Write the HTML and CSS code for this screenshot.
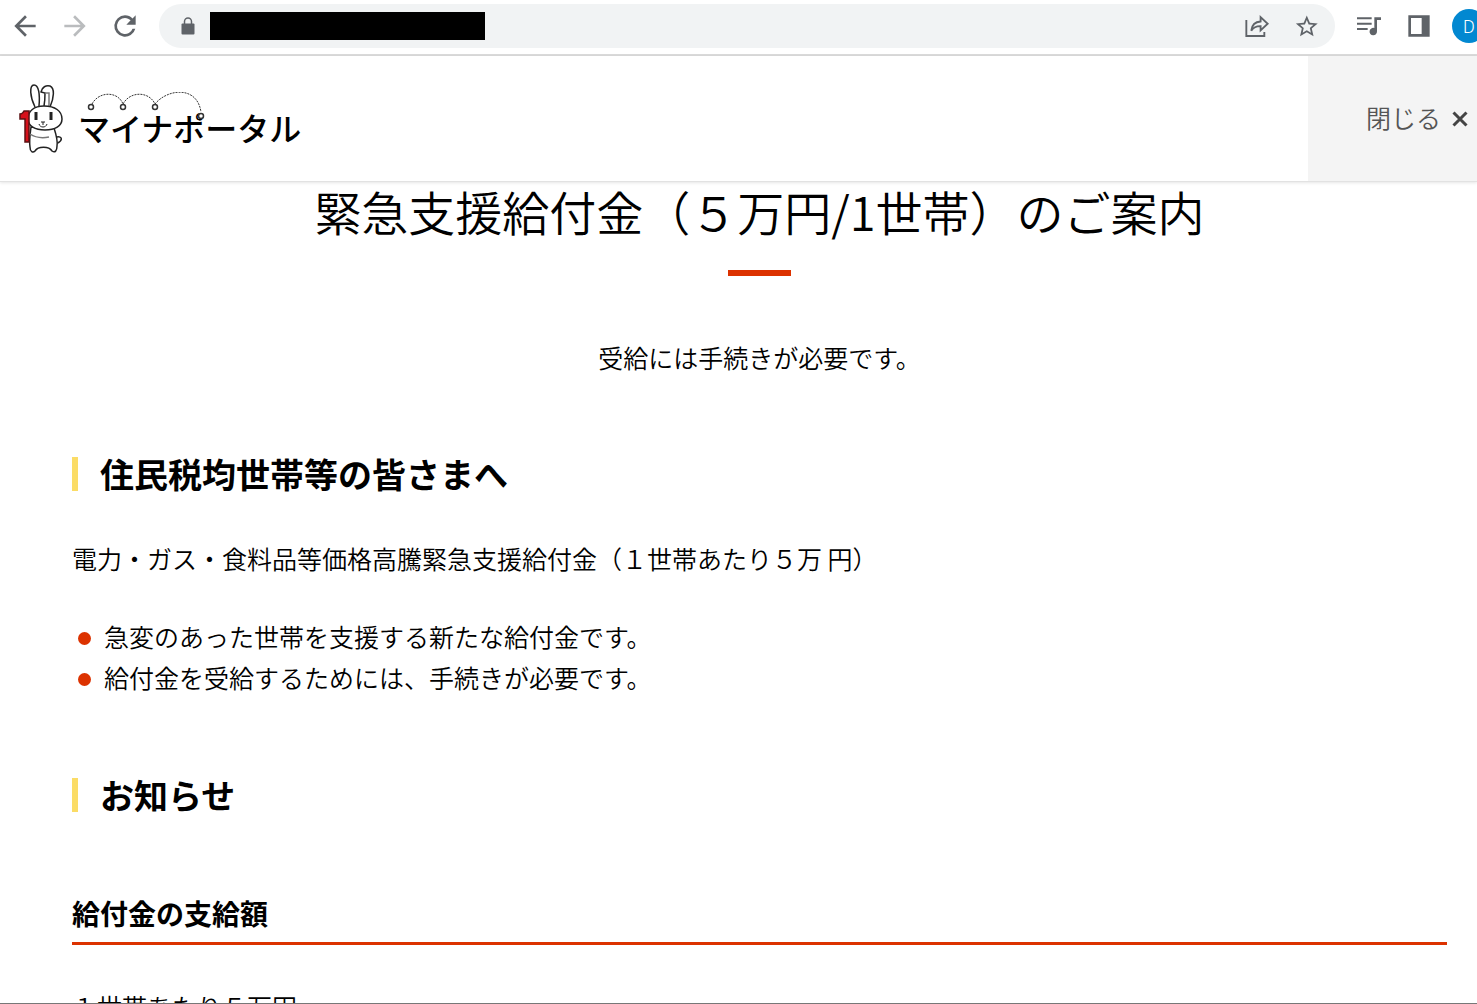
FILE: index.html
```html
<!DOCTYPE html>
<html lang="ja">
<head>
    <meta charset="UTF-8">
    <meta name="viewport" content="width=device-width, initial-scale=1">
    <title>マイナポータル</title>
    <link rel="stylesheet" href="styles.css">
</head>
<body>
    <div class="window">
        <div class="toolbar">
            <button type="button" class="icon-button" aria-label="戻る">
                <svg viewBox="0 0 24 24"><path d="M20 11H7.8l5.6-5.6L12 4l-8 8 8 8 1.4-1.4L7.8 13H20z"/></svg>
            </button>
            <button type="button" class="icon-button forward" aria-label="進む">
                <svg viewBox="0 0 24 24"><path d="M4 11h12.2l-5.6-5.6L12 4l8 8-8 8-1.4-1.4 5.6-5.6H4z"/></svg>
            </button>
            <button type="button" class="icon-button" aria-label="再読み込み">
                <svg viewBox="0 0 24 24"><path d="M17.65 6.35A7.96 7.96 0 0 0 12 4a8 8 0 1 0 7.73 10h-2.08A6 6 0 1 1 12 6c1.66 0 3.14.69 4.22 1.78L13 11h7V4z"/></svg>
            </button>
            <div class="address-bar">
                <svg class="lock" viewBox="0 0 14 18"><path d="M3.500 7V4.500a3.500 3.500 0 0 1 7 0V7" fill="none" stroke="#5f6368" stroke-width="1.500"/><rect x="0.500" y="6.500" width="13" height="11" rx="1"/></svg>
                <input type="text" class="address" aria-label="アドレス">
                <div class="address-actions">
                    <button type="button" class="icon-button" aria-label="共有">
                        <svg viewBox="0 0 24 24" fill="none" stroke="#5f6368" stroke-width="1.400"><path d="M4 7.500V19.500h13.500v-3"/><path d="M7.700 15.500c.5-4.500 3-6.700 7-6.900V5.300l5.300 5-5.300 5v-3.200c-3-.1-5.300.9-7 3.400z"/></svg>
                    </button>
                    <button type="button" class="icon-button" aria-label="ブックマーク">
                        <svg viewBox="0 0 24 24"><path d="M22 9.240l-7.190-.62L12 2 9.190 8.630 2 9.240l5.460 4.730L5.820 21 12 17.270 18.180 21l-1.630-7.030zM12 15.400l-3.760 2.270 1-4.280-3.320-2.880 4.380-.38L12 6.100l1.710 4.040 4.380.38-3.320 2.880 1 4.280z" transform="translate(2 2.500) scale(.82)"/></svg>
                    </button>
                </div>
            </div>
            <div class="toolbar-end">
                <button type="button" class="icon-button" aria-label="メディア">
                    <svg viewBox="0 0 24 24"><path d="M3 5.500h11V7H3zM3 9.500h11V11H3zM3 13.500h8V15H3zM16 5.500h5v2h-3V16a2.800 2.800 0 1 1-2-2.500z"/></svg>
                </button>
                <button type="button" class="icon-button" aria-label="サイドパネル">
                    <svg viewBox="0 0 24 24"><path d="M4 4h16v16H4zM6 6v12h8V6z" fill-rule="evenodd"/></svg>
                </button>
                <button type="button" class="avatar" aria-label="プロフィール">D</button>
            </div>
        </div>

        <header class="site-header">
            <a href="#" class="logo">
                <svg class="mascot" viewBox="0 0 46 72" fill="#fff" stroke="#222" stroke-width="1.500">
                    <!-- ears -->
                    <path d="M17 24C12 14 11 2 16 2s6 10 5 21"/>
                    <path d="M26 23c1-5 1-9 1-13l-4-1c1-5 5-7 9-6 5 2 4 12 0 21"/>
                    <path d="M27 10h4v13" fill="none" stroke="#777"/>
                    <!-- body -->
                    <path d="M13 44c-1 8-2 13-1 20 0 5 3 6 5 4 3-5 14-5 17 0 3 2 5 0 5-5 1-6-1-12-3-18z"/>
                    <path d="M39 54c5-1 6 3 1 6" fill="none"/>
                    <path d="M12 51c6 4 14 4 19 3" fill="none" stroke="#777"/>
                    <!-- head -->
                    <path d="M26 23c11 0 18 5 18 13 0 7-7 11-17 11S10 43 10 36c0-8 6-13 16-13z"/>
                    <path d="M18 29v8M33 29v8" stroke-width="3"/>
                    <path d="M23 39h4M25 39v3M21 41c1 4 7 4 8 0" fill="none" stroke-width="1"/>
                    <!-- number one -->
                    <path d="M6 28h5v31H7V36H2v-5c2 0 3-1 4-3z" fill="#d7101b" stroke="#5b1113"/>
                </svg>
                <span class="logo-name">
                    マイナポータル
                    <svg class="logo-dots" viewBox="0 0 120 30" fill="none" stroke="#333">
                        <g stroke-dasharray="2 1">
                            <path d="M5 12C12-1 31-1 36 12M36 12C43-1 62-1 68 12M68 12C80-3 110-7 114 20"/>
                        </g>
                        <g fill="#fff" stroke-width="1.500">
                            <circle cx="4" cy="15" r="2.500"/>
                            <circle cx="36" cy="15" r="2.500"/>
                            <circle cx="68" cy="15" r="2.500"/>
                            <circle cx="114" cy="24" r="2.500"/>
                        </g>
                    </svg>
                </span>
            </a>
            <button type="button" class="close">
                <span>閉じる</span>
                <svg viewBox="0 0 16 16"><path d="M1.500 1.500l13 13M14.500 1.500l-13 13" stroke="#444" stroke-width="3"/></svg>
            </button>
        </header>

        <main class="content">
            <h1>緊急支援給付金（５万円/1世帯）のご案内</h1>
            <p class="lead">受給には手続きが必要です。</p>

            <h2>住民税均世帯等の皆さまへ</h2>
            <p class="summary">電力・ガス・食料品等価格高騰緊急支援給付金（１世帯あたり５万 円）</p>
            <ul>
                <li>急変のあった世帯を支援する新たな給付金です。</li>
                <li>給付金を受給するためには、手続きが必要です。</li>
            </ul>

            <h2>お知らせ</h2>
            <h3>給付金の支給額</h3>
            <p class="amount">１世帯あたり５万円</p>
        </main>
    </div>
</body>
</html>
```

FILE: styles.css
```css
* {
    box-sizing: border-box;
}
body {
    margin: 0;
    font-family: "Noto Sans CJK JP", sans-serif;
    font-size: 25px;
    font-weight: 350;
    line-height: 41px;
    color: #000;
    background: #fff;
}
.window {
    display: flex;
    flex-direction: column;
    height: 100vh;
    overflow: hidden;
    border-bottom: 1px solid #777;
}
button {
    padding: 0;
    border: none;
    background: none;
    font-family: inherit;
    font-weight: inherit;
    cursor: pointer;
}

/* browser toolbar */
.toolbar {
    display: flex;
    flex-shrink: 0;
    align-items: center;
    gap: 16px;
    padding: 4px 0 6px 8px;
    border-bottom: 2px solid #dadada;
}
.icon-button {
    display: flex;
    align-items: center;
    justify-content: center;
    flex-shrink: 0;
    width: 34px;
    height: 34px;
}
.icon-button svg {
    width: 32px;
    height: 32px;
}
.toolbar svg {
    fill: #5f6368;
}
.toolbar svg[fill="none"] {
    fill: none;
}
.toolbar .forward svg {
    fill: #babcbe;
}
.address-bar {
    display: flex;
    flex: 1;
    align-items: center;
    height: 44px;
    margin: 0 1px;
    padding: 0 11px 0 22px;
    border-radius: 22px;
    background: #f1f3f4;
}
.lock {
    flex-shrink: 0;
    width: 14px;
    height: 18px;
    margin-right: 15px;
}
.address {
    width: 275px;
    height: 28px;
    padding: 0 8px;
    border: none;
    background: #000;
    color: #000;
    font-size: 20px;
}
.address-actions {
    display: flex;
    gap: 16px;
    margin-left: auto;
}
.toolbar-end {
    display: flex;
    gap: 16px;
    margin-right: -9px;
}
.avatar {
    width: 34px;
    height: 34px;
    border-radius: 50%;
    background: #0288d1;
    color: #fff;
    font-family: Roboto, sans-serif;
    font-size: 18px;
}

/* site header */
.site-header {
    display: flex;
    flex-shrink: 0;
    justify-content: space-between;
    height: 126px;
    border-bottom: 1px solid #e2e2e2;
    box-shadow: 0 1px 3px rgba(0,0,0,0.1);
}
.logo {
    display: flex;
    align-items: center;
    gap: 14px;
    padding-left: 18px;
    color: #000;
    text-decoration: none;
}
.mascot {
    width: 46px;
    height: 72px;
}
.logo-name {
    position: relative;
    padding-top: 18px;
    font-size: 32px;
    font-weight: 500;
}
.logo-dots {
    position: absolute;
    top: 3px;
    left: 9px;
    width: 120px;
    height: 30px;
}
.close {
    display: flex;
    align-items: center;
    gap: 11px;
    padding: 0 9px 0 58px;
    background: #f4f4f4;
    color: #555;
    font-size: 25px;
}
.close span {
    padding-bottom: 4px;
}
.close svg {
    width: 16px;
    height: 16px;
}

/* page content */
.content {
    padding: 0 30px 0 72px;
}
h1, h2, h3, p, ul {
    margin: 0;
}
h1 {
    font-size: 47px;
    font-weight: 350;
    line-height: 58px;
    text-align: center;
}
h1::after {
    content: "";
    display: block;
    width: 63px;
    height: 6px;
    margin: 30px auto 0;
    background: #dc3200;
}
.lead {
    margin: 61px 0 79px;
    text-align: center;
}
h2 {
    padding-left: 22px;
    border-left: 6px solid #fbdc66;
    font-size: 34px;
    line-height: 34px;
}
.summary {
    margin: 47px 0 37px;
}
ul {
    margin-bottom: 80px;
    padding: 0;
    list-style: none;
}
li {
    display: flex;
    align-items: center;
    gap: 13px;
    padding-left: 6px;
}
li::before {
    content: "";
    width: 13px;
    height: 13px;
    margin-top: 3px;
    border-radius: 50%;
    background: #dc3200;
}
h3 {
    margin: 81px 0 41px;
    padding-bottom: 8px;
    border-bottom: 3px solid #dc3200;
    font-size: 28px;
}
```
